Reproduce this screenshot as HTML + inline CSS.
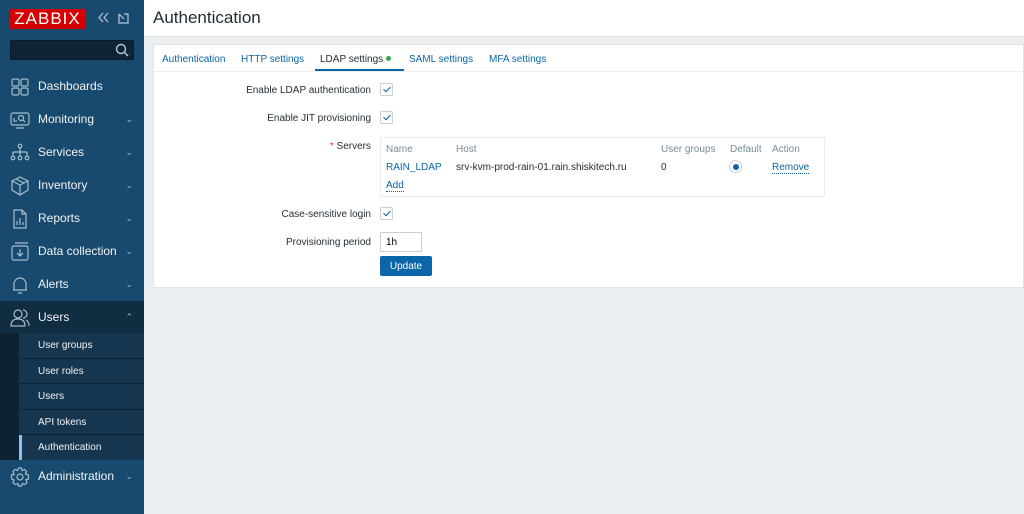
<!DOCTYPE html>
<html><head><style>
*{box-sizing:border-box;margin:0;padding:0}
body{width:1024px;height:514px;overflow:hidden;font-family:"Liberation Sans",sans-serif;background:#ebeef0;position:relative}
#sb{position:absolute;left:0;top:0;width:144px;height:514px;background:#174a6e;color:#f2f2f2}
.logo{position:absolute;left:10px;top:9px;width:75px;height:20px;background:#d40000;color:#fff;font-size:17px;letter-spacing:1px;line-height:20px;text-align:center}
.srch{position:absolute;left:10px;top:40px;width:124px;height:20px;background:#0f2537;border:1px solid #0a1a28;border-radius:2px}
.mi{position:absolute;left:0;width:144px;height:33px;font-size:12px;line-height:33px}
.mi span{position:absolute;left:38px}
.mi svg{position:absolute;left:10px;top:7px;width:20px;height:20px;fill:none;stroke:#a9bccc;stroke-width:1.2}
.mi b{position:absolute;right:11px;top:0;font-weight:normal;color:#a9bccc;font-size:9px}
.sub{position:absolute;left:0;top:333px;width:144px;height:127px;background:#0e2231}
.si{position:absolute;left:19px;width:125px;height:24.5px;background:#163650;font-size:10px;line-height:25px;padding-left:19px;color:#f2f2f2}
#hd{position:absolute;left:144px;top:0;width:880px;height:37px;background:#fff;border-bottom:1px solid #e0e3e5}
#hd h1{font-weight:normal;font-size:17px;color:#1f2c33;position:absolute;left:9px;top:8px}
#pn{position:absolute;left:153px;top:44px;width:871px;height:244px;background:#fff;border:1px solid #dfe4e7}
.tabs{position:absolute;left:0;top:0;width:871px;height:27px;border-bottom:1px solid #ebeef0;font-size:10px;color:#0a66a8}
.tabs span{position:absolute;top:9px}
.lb{position:absolute;font-size:10px;color:#1f2c33;text-align:right;right:652px}
.cb{position:absolute;left:226px;width:13px;height:13px;border:1px solid #c8d0d6;border-radius:2px}
.cb:after{content:"";position:absolute;left:4px;top:1px;width:3px;height:6px;border:solid #0a66a8;border-width:0 1.5px 1.5px 0;transform:rotate(45deg)}
.t{position:absolute;font-size:10px}
</style></head><body>
<div id="sb">
<div class="logo">ZABBIX</div>
<svg style="position:absolute;left:97px;top:11px" width="34" height="14" fill="none" stroke="#b8c8d6" stroke-width="1.2"><path d="M6 2L2 6.5L6 11M11 2L7 6.5L11 11"/><path d="M22 3V12H31V3H27M22 3L27 8"/></svg>
<div class="srch"><svg style="position:absolute;right:4px;top:2px" width="14" height="14" fill="none" stroke="#b8c8d6" stroke-width="1.4"><circle cx="6" cy="6" r="4.5"/><path d="M9.5 9.5L13 13"/></svg></div>
<div class="mi" style="top:70px"><svg viewBox="0 0 20 20"><rect x="2" y="2" width="7" height="7" rx="1.5"/><rect x="11" y="2" width="7" height="7" rx="1.5"/><rect x="2" y="11" width="7" height="7" rx="1.5"/><rect x="11" y="11" width="7" height="7" rx="1.5"/></svg><span>Dashboards</span></div>
<div class="mi" style="top:103px"><svg viewBox="0 0 20 20"><rect x="1" y="3" width="18" height="12" rx="2"/><path d="M6 18H14M4 12V8M6 12V10"/><circle cx="11" cy="8" r="2.5"/><path d="M13 10L15 12"/></svg><span>Monitoring</span><b>⌄</b></div>
<div class="mi" style="top:136px"><svg viewBox="0 0 20 20"><circle cx="10" cy="3" r="1.8"/><path d="M10 5V9M3 9H17M3 9V13M10 9V13M17 9V13"/><circle cx="3" cy="15" r="1.8"/><circle cx="10" cy="15" r="1.8"/><circle cx="17" cy="15" r="1.8"/></svg><span>Services</span><b>⌄</b></div>
<div class="mi" style="top:169px"><svg viewBox="0 0 20 20"><path d="M10 1L18 5V14L10 19L2 14V5Z M2 5L10 9L18 5 M10 9V19 M6 3L14 7"/></svg><span>Inventory</span><b>⌄</b></div>
<div class="mi" style="top:202px"><svg viewBox="0 0 20 20"><path d="M4 1H12L16 5V19H4Z M12 1V5H16 M7 16V12M10 16V9M13 16V13"/></svg><span>Reports</span><b>⌄</b></div>
<div class="mi" style="top:235px"><svg viewBox="0 0 20 20"><rect x="2" y="4" width="16" height="14" rx="2"/><path d="M5 1H18M10 7V14M7 11L10 14L13 11"/></svg><span>Data collection</span><b>⌄</b></div>
<div class="mi" style="top:268px"><svg viewBox="0 0 20 20"><path d="M4 15V9A6 6 0 0 1 16 9V15H3H17M8 18H12"/></svg><span>Alerts</span><b>⌄</b></div>
<div class="mi" style="top:301px;background:#112d42"><svg viewBox="0 0 20 20"><circle cx="8" cy="6" r="4"/><path d="M1 18C1 13 4 11 8 11S15 13 15 18ZM13 2A4 4 0 0 1 13 10M16 12C18 13 19 15 19 18"/></svg><span>Users</span><b>⌃</b></div>
<div class="sub">
<div class="si" style="top:0">User groups</div>
<div class="si" style="top:25.5px">User roles</div>
<div class="si" style="top:51px">Users</div>
<div class="si" style="top:76.5px">API tokens</div>
<div class="si" style="top:102px;border-left:3px solid #8dc2ea;padding-left:16px">Authentication</div>
</div>
<div class="mi" style="top:460px"><svg viewBox="0 0 20 20"><circle cx="10" cy="10" r="3"/><path d="M8.5 1H11.5L12 3.5L14.5 2.5L16.5 4.5L15.5 7L18.5 8V12L16 12.5L17 15.5L15 17.5L12.5 16.5L11.5 19H8.5L8 16.5L5 17.5L3 15.5L4 13L1.5 12V8L4 7.5L3 4.5L5 2.5L7.5 3.5Z"/></svg><span>Administration</span><b>⌄</b></div>
</div>
<div id="hd"><h1>Authentication</h1></div>
<div id="pn">
<div class="tabs">
<span style="left:8px">Authentication</span>
<span style="left:87px">HTTP settings</span>
<span style="left:166px;color:#1f2c33">LDAP settings <b style="display:inline-block;width:5px;height:5px;border-radius:50%;background:#34a853;vertical-align:1px"></b></span>
<div style="position:absolute;left:161px;top:24px;width:89px;height:2px;background:#0a66a8"></div>
<span style="left:255px">SAML settings</span>
<span style="left:335px">MFA settings</span>
</div>
<div class="lb" style="top:40px">Enable LDAP authentication</div><div class="cb" style="top:38px"></div>
<div class="lb" style="top:68px">Enable JIT provisioning</div><div class="cb" style="top:66px"></div>
<div class="lb" style="top:96px"><span style="color:#e33">*</span> Servers</div>
<div style="position:absolute;left:226px;top:92px;width:445px;height:60px;border:1px solid #ebeef0">
<div class="t" style="left:5px;top:6px;color:#768d99">Name</div>
<div class="t" style="left:75px;top:6px;color:#768d99">Host</div>
<div class="t" style="left:280px;top:6px;color:#768d99">User groups</div>
<div class="t" style="left:349px;top:6px;color:#768d99">Default</div>
<div class="t" style="left:391px;top:6px;color:#768d99">Action</div>
<div class="t" style="left:5px;top:24px;color:#0a66a8">RAIN_LDAP</div>
<div class="t" style="left:75px;top:24px;color:#1f2c33">srv-kvm-prod-rain-01.rain.shiskitech.ru</div>
<div class="t" style="left:280px;top:24px;color:#1f2c33">0</div>
<div style="position:absolute;left:348px;top:22px;width:13px;height:13px;border:1px solid #c8d0d6;border-radius:50%"><div style="position:absolute;left:2.5px;top:2.5px;width:6px;height:6px;border-radius:50%;background:#0a66a8"></div></div>
<div class="t" style="left:391px;top:24px;color:#0a66a8;border-bottom:1px dotted #0a66a8">Remove</div>
<div class="t" style="left:5px;top:42px;color:#0a66a8;border-bottom:1px dotted #0a66a8">Add</div>
</div>
<div class="lb" style="top:164px">Case-sensitive login</div><div class="cb" style="top:162px"></div>
<div class="lb" style="top:192px">Provisioning period</div>
<div style="position:absolute;left:226px;top:187px;width:42px;height:20px;border:1px solid #c8d0d6;font-size:10px;padding:4px 0 0 5px">1h</div>
<div style="position:absolute;left:226px;top:211px;width:52px;height:20px;background:#0a66a8;border-radius:2px;color:#fff;font-size:10px;text-align:center;line-height:21px">Update</div>
</div>
</body></html>
